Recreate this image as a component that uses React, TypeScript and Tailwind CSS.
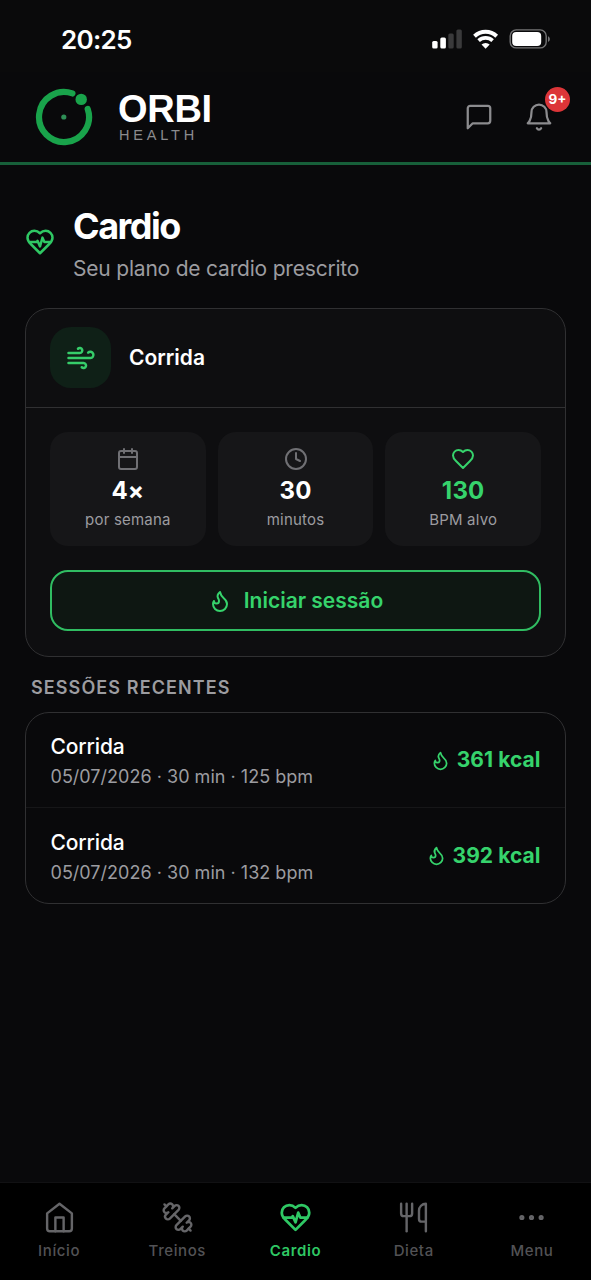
import type { ReactNode } from "react";

type IconProps = { className?: string; strokeWidth?: number; children?: ReactNode };

function Icon({ className = "", strokeWidth = 2, children }: IconProps) {
  return (
    <svg
      className={`shrink-0 ${className}`}
      viewBox="0 0 24 24"
      fill="none"
      stroke="currentColor"
      strokeWidth={strokeWidth}
      strokeLinecap="round"
      strokeLinejoin="round"
    >
      {children}
    </svg>
  );
}

const HEART =
  "M19 14c1.49-1.46 3-3.21 3-5.5A5.5 5.5 0 0 0 16.5 3c-1.76 0-3 .5-4.5 2-1.5-1.5-2.74-2-4.5-2A5.5 5.5 0 0 0 2 8.5c0 2.3 1.5 4.05 3 5.5l7 7Z";

const HeartIcon = (p: IconProps) => (
  <Icon {...p}>
    <path d={HEART} />
  </Icon>
);

const HeartPulseIcon = (p: IconProps) => (
  <Icon {...p}>
    <path d={HEART} />
    <path d="M3.22 12H9.5l.5-1 2 4.5 2-7 1.5 3.5h5.27" />
  </Icon>
);

const FlameIcon = (p: IconProps) => (
  <Icon {...p}>
    <path d="M8.5 14.5A2.5 2.5 0 0 0 11 12c0-1.38-.5-2-1-3-1.072-2.143-.224-4.054 2-6 .5 2.5 2 4.9 4 6.5 2 1.6 3 3.5 3 5.5a7 7 0 1 1-14 0c0-1.153.433-2.294 1-3a2.5 2.5 0 0 0 2.5 2.5z" />
  </Icon>
);

const MessageIcon = (p: IconProps) => (
  <Icon {...p}>
    <path d="M21 15a2 2 0 0 1-2 2H7l-4 4V5a2 2 0 0 1 2-2h14a2 2 0 0 1 2 2z" />
  </Icon>
);

const BellIcon = (p: IconProps) => (
  <Icon {...p}>
    <path d="M6 8a6 6 0 0 1 12 0c0 7 3 9 3 9H3s3-2 3-9" />
    <path d="M10.3 21a1.94 1.94 0 0 0 3.4 0" />
  </Icon>
);

const WindIcon = (p: IconProps) => (
  <Icon {...p}>
    <path d="M17.7 7.7a2.5 2.5 0 1 1 1.8 4.3H2" />
    <path d="M9.6 4.6A2 2 0 1 1 11 8H2" />
    <path d="M12.6 19.4A2 2 0 1 0 14 16H2" />
  </Icon>
);

const CalendarIcon = (p: IconProps) => (
  <Icon {...p}>
    <path d="M8 2v4" />
    <path d="M16 2v4" />
    <rect width="18" height="18" x="3" y="4" rx="2" />
    <path d="M3 10h18" />
  </Icon>
);

const ClockIcon = (p: IconProps) => (
  <Icon {...p}>
    <circle cx="12" cy="12" r="10" />
    <polyline points="12 6 12 12 16 14" />
  </Icon>
);

const HomeIcon = (p: IconProps) => (
  <Icon {...p}>
    <path d="m3 9 9-7 9 7v11a2 2 0 0 1-2 2H5a2 2 0 0 1-2-2z" />
    <polyline points="9 22 9 12 15 12 15 22" />
  </Icon>
);

const DumbbellIcon = (p: IconProps) => (
  <Icon {...p}>
    <path d="M14.4 14.4 9.6 9.6" />
    <path d="M18.657 21.485a2 2 0 1 1-2.829-2.828l-1.767 1.768a2 2 0 1 1-2.829-2.829l6.364-6.364a2 2 0 1 1 2.829 2.829l-1.768 1.767a2 2 0 1 1 2.828 2.829z" />
    <path d="m21.5 21.5-1.4-1.4" />
    <path d="M3.9 3.9 2.5 2.5" />
    <path d="M6.404 12.768a2 2 0 1 1-2.829-2.829l1.768-1.767a2 2 0 1 1-2.828-2.829l2.828-2.828a2 2 0 1 1 2.829 2.828l1.767-1.768a2 2 0 1 1 2.829 2.829z" />
  </Icon>
);

const UtensilsIcon = (p: IconProps) => (
  <Icon {...p}>
    <path d="M3 2v7c0 1.1.9 2 2 2h4a2 2 0 0 0 2-2V2" />
    <path d="M7 2v20" />
    <path d="M21 15V2a5 5 0 0 0-5 5v6c0 1.1.9 2 2 2h3Zm0 0v7" />
  </Icon>
);

const MoreIcon = (p: IconProps) => (
  <Icon {...p}>
    <circle cx="12" cy="12" r="1" />
    <circle cx="19" cy="12" r="1" />
    <circle cx="5" cy="12" r="1" />
  </Icon>
);

function StatusBar() {
  return (
    <div className="flex h-[72px] items-start justify-between bg-[#0a0a0b] pt-[24px] pl-[61px] pr-[40px]">
      <span className="text-[26px] font-semibold leading-8 tracking-[-0.7px] text-white">20:25</span>
      <div className="mt-[5px] flex items-center">
        <svg className="h-5 w-[31px]" viewBox="0 0 31 20">
          <rect x="0.2" y="12" width="5.4" height="7.6" rx="1.5" fill="#fff" />
          <rect x="8.3" y="8.6" width="5.6" height="11" rx="1.5" fill="#fff" />
          <rect x="16.3" y="4.6" width="5.4" height="15" rx="1.5" fill="#3a3a3b" />
          <rect x="24.4" y="0.6" width="5.4" height="19" rx="1.5" fill="#3a3a3b" />
        </svg>
        <svg className="ml-[10px] h-5 w-[26px]" viewBox="0 0 26 20" fill="none" stroke="#fff">
          <path d="M1.5 7.2A16.2 16.2 0 0 1 23.7 7.2" strokeWidth="4" />
          <path d="M5.6 11.7A10.3 10.3 0 0 1 19.6 11.7" strokeWidth="3.7" />
          <path d="M8.5 15.5a6.1 6.1 0 0 1 8.2 0L12.6 19.8z" fill="#fff" stroke="none" />
        </svg>
        <svg className="ml-[10px] h-5 w-[42px]" viewBox="0 0 42 20">
          <rect x="1.2" y="0.9" width="36" height="18" rx="6" fill="none" stroke="#747475" strokeWidth="1.4" />
          <rect x="3.2" y="3" width="29" height="13.9" rx="4" fill="#fff" />
          <path d="M39 7.2c2.5.9 2.5 4.7 0 5.6z" fill="#747475" />
        </svg>
      </div>
    </div>
  );
}

function Logo() {
  return (
    <svg className="size-[58px]" viewBox="0 0 58 58" fill="none">
      <path d="M37.4 5.45A25 25 0 1 0 52.7 21" stroke="#19a34b" strokeWidth="6.2" strokeLinecap="round" />
      <circle cx="46.2" cy="11.4" r="5.7" fill="#19a34b" />
      <circle cx="28.8" cy="29" r="2.6" fill="#2f8f57" />
    </svg>
  );
}

function Header() {
  return (
    <header className="flex h-[93px] items-start border-b-3 border-[#17603a] pl-[35px] pr-[37px]">
      <div className="mt-4">
        <Logo />
      </div>
      <div className="ml-[25px] mt-[20px] font-['Liberation_Sans',sans-serif]">
        <div className="text-[38px] font-bold leading-[34px] tracking-[-0.3px] text-white">ORBI</div>
        <div className="pl-px pt-px text-[14.5px] leading-4 tracking-[3.8px] text-[#8b8b8e]">HEALTH</div>
      </div>
      <div className="ml-auto mt-[30px] flex gap-[30px] text-[#8c8c8f]">
        <MessageIcon className="size-[30px]" strokeWidth={1.8} />
        <div className="relative">
          <BellIcon className="size-[30px]" strokeWidth={1.8} />
          <span className="absolute -right-[16px] -top-[15px] flex size-[25px] items-center justify-center rounded-full bg-[#dc3538] text-[13.5px] font-bold leading-none text-white">
            9+
          </span>
        </div>
      </div>
    </header>
  );
}

type StatProps = { icon: ReactNode; value: string; label: string; highlight?: boolean };

function Stat({ icon, value, label, highlight }: StatProps) {
  return (
    <div className="flex h-[114px] flex-1 flex-col items-center rounded-[18px] bg-[#161618] pt-[15px]">
      {icon}
      <div
        className={`mt-0.5 text-[24px] font-bold leading-9 tracking-[0.2px] ${highlight ? "text-[#36d36c]" : "text-white"}`}
      >
        {value}
      </div>
      <div className="text-[15px] leading-[22px] tracking-[0.2px] text-[#9c9ca0]">{label}</div>
    </div>
  );
}

function PlanCard() {
  return (
    <section className="h-[349px] rounded-[24px] border border-[#303032] bg-[#0e0e10]">
      <div className="flex h-[99px] items-center gap-[18px] border-b border-[#303032] px-6">
        <div className="mb-px flex size-[61px] items-center justify-center rounded-[21px] bg-[#0f2017] text-[#36cd6a]">
          <WindIcon className="size-[30px]" />
        </div>
        <h2 className="text-[21px] font-semibold leading-8 text-white">Corrida</h2>
      </div>
      <div className="px-[24px] pt-6">
        <div className="flex gap-3">
          <Stat
            icon={<CalendarIcon className="size-6 text-[#707074]" strokeWidth={2} />}
            value="4×"
            label="por semana"
          />
          <Stat
            icon={<ClockIcon className="size-6 text-[#707074]" strokeWidth={2} />}
            value="30"
            label="minutos"
          />
          <Stat
            icon={<HeartIcon className="size-6 text-[#36d36c]" strokeWidth={2} />}
            value="130"
            label="BPM alvo"
            highlight
          />
        </div>
        <button className="mt-6 flex h-[61px] w-full items-center justify-center gap-3 rounded-[18px] border-2 border-[#30bd62] bg-[#0e1712] text-[#36d36c]">
          <FlameIcon className="size-6" />
          <span className="text-[21px] font-semibold leading-8">Iniciar sessão</span>
        </button>
      </div>
    </section>
  );
}

const sessions = [
  { name: "Corrida", detail: "05/07/2026 · 30 min · 125 bpm", kcal: "361 kcal" },
  { name: "Corrida", detail: "05/07/2026 · 30 min · 132 bpm", kcal: "392 kcal" },
];

function RecentSessions() {
  return (
    <section>
      <h3 className="mt-[19px] pl-[6px] text-[18px] font-semibold leading-6 tracking-[1.1px] text-[#9c9ca0]">
        SESSÕES RECENTES
      </h3>
      <ul className="mt-[12px] h-[192px] divide-y divide-[#161618] rounded-[24px] border border-[#303032] bg-[#09090b]">
        {sessions.map((s) => (
          <li key={s.detail} className="flex h-[95px] items-center justify-between pl-[24.5px] pr-[24.5px]">
            <div className="pt-1">
              <div className="text-[21px] font-medium leading-[30px] tracking-[-0.15px] text-white">{s.name}</div>
              <div className="text-[18px] leading-[30px] tracking-[0.02px] text-[#9c9ca0]">{s.detail}</div>
            </div>
            <div className="flex items-center gap-[6px] text-[#36d36c]">
              <FlameIcon className="size-[21px]" />
              <span className="text-[21px] font-bold leading-8 tracking-[0.05px]">{s.kcal}</span>
            </div>
          </li>
        ))}
      </ul>
    </section>
  );
}

const tabs = [
  { label: "Início", icon: HomeIcon },
  { label: "Treinos", icon: DumbbellIcon },
  { label: "Cardio", icon: HeartPulseIcon, active: true },
  { label: "Dieta", icon: UtensilsIcon },
  { label: "Menu", icon: MoreIcon },
];

function TabBar() {
  return (
    <nav className="flex h-[98px] border-t border-[#111113] bg-black">
      {tabs.map(({ label, icon: TabIcon, active }) => (
        <div
          key={label}
          className={`flex flex-1 flex-col items-center pt-[18px] ${active ? "text-[#2fc864]" : "text-[#656568]"}`}
        >
          <TabIcon className="size-[33px]" strokeWidth={active ? 2 : 1.75} />
          <span
            className={`mt-[6px] text-[15px] leading-[22px] tracking-[0.6px] ${active ? "font-semibold" : "font-medium text-[#525255]"}`}
          >
            {label}
          </span>
        </div>
      ))}
    </nav>
  );
}

export default function App() {
  return (
    <div className="flex h-[1280px] w-[591px] flex-col overflow-hidden bg-[#09090b] font-['Inter',sans-serif]">
      <StatusBar />
      <Header />
      <main className="flex-1 px-[25px] pt-[43px]">
        <div className="mb-[22px] flex h-[78px] items-center gap-[18px]">
          <HeartPulseIcon className="mb-[10px] size-[30px] text-[#2fc864]" />
          <div className="-mt-[5px]">
            <h1 className="text-[36px] font-bold leading-[42px] tracking-[-1.5px] text-white">Cardio</h1>
            <p className="mt-[6px] text-[21px] leading-8 tracking-[-0.2px] text-[#9c9ca0]">
              Seu plano de cardio prescrito
            </p>
          </div>
        </div>
        <PlanCard />
        <RecentSessions />
      </main>
      <TabBar />
    </div>
  );
}
